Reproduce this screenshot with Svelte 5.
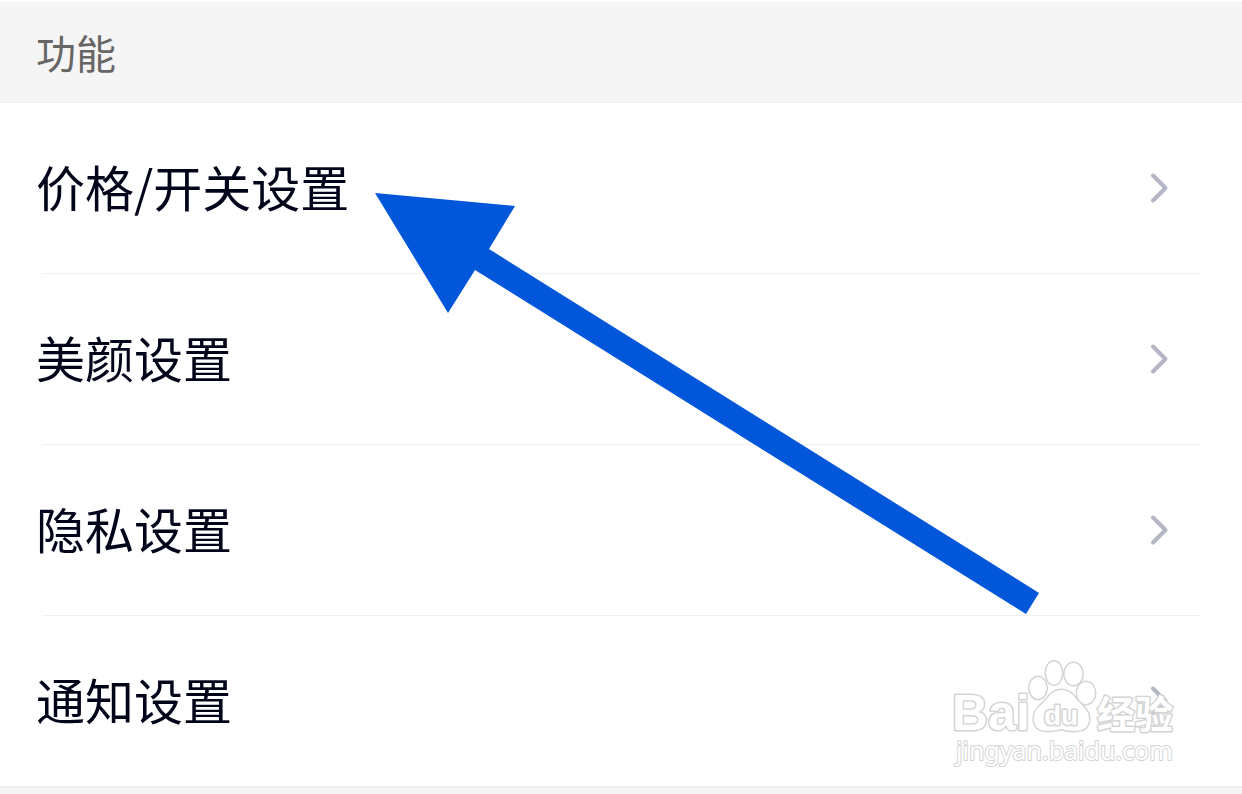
<script lang="ts">
  const title = '功能';
  const items = ['价格/开关设置', '美颜设置', '隐私设置', '通知设置'];
</script>

<main class="settings">
  <h2 class="section-title">{title}</h2>

  <ul class="list">
    {#each items as item (item)}
      <li>
        <button class="row" type="button">
          <span class="label">{item}</span>
          <svg class="chevron" viewBox="0 0 20 32" aria-hidden="true">
            <path d="M3 3.5 L15.5 16 L3 28.5" />
          </svg>
        </button>
      </li>
    {/each}
  </ul>

  <svg class="arrow" viewBox="0 0 666 422" aria-hidden="true">
    <path d="M0 1 L140 14 L114 57 L664 401 L651 422 L100 78 L73 121 Z" />
  </svg>

  <svg class="watermark" viewBox="0 0 230 120" aria-label="Baidu 经验">
    <text class="brand" x="0" y="80">Bai</text>
    <ellipse cx="86" cy="38" rx="8.5" ry="11" />
    <ellipse cx="102" cy="23" rx="8" ry="11.5" />
    <ellipse cx="121.5" cy="24" rx="9" ry="11" />
    <ellipse cx="134" cy="43" rx="9" ry="11" />
    <path d="M109 40 C99 40 96 49 91 53 C85 58 81 63 82 71 C84 83 97 82 109 79 C121 82 135 83 137 71 C138 63 133 58 127 52 C121 46 119 40 109 40 Z" />
    <text class="du" x="92" y="75">du</text>
    <text class="cjk" x="145" y="78">经验</text>
    <text class="site" x="4" y="110">jingyan.baidu.com</text>
  </svg>
</main>

<style>
  :global(body) {
    margin: 0;
    background: #fff;
  }

  .settings {
    position: relative;
    overflow: hidden;
    border-top: 2px solid #fff;
    border-bottom: 8px solid #f5f5f5;
    font-family: 'Noto Sans CJK SC', sans-serif;
  }

  .section-title {
    margin: 0;
    padding: 20px 36px;
    border-bottom: 1px solid #f0f0f0;
    background: #f5f5f5;
    color: #666;
    font-size: 40px;
    font-weight: 400;
    line-height: 60px;
  }

  .list {
    margin: 0;
    padding: 0;
    list-style: none;
  }

  .row {
    display: flex;
    align-items: center;
    justify-content: space-between;
    width: 100%;
    padding: 50px 72px 50px 36px;
    border: 0;
    background: none;
    color: #020419;
    font: inherit;
    font-size: 49px;
    line-height: 66px;
    text-align: left;
    cursor: pointer;
  }

  .label {
    padding-bottom: 4px;
  }

  li::after {
    content: '';
    display: block;
    height: 1px;
    margin: 0 42px;
    background: #f0f0f0;
  }

  li:last-child::after {
    height: 2px;
    margin: 0;
  }

  .chevron {
    width: 20px;
    height: 32px;
    fill: none;
    stroke: #b5b6c5;
    stroke-width: 4;
    stroke-linecap: round;
    stroke-linejoin: round;
  }

  /* pointer drawn over the rows, tip beside the first label */
  .arrow {
    position: absolute;
    top: 190px;
    left: 375px;
    width: 666px;
    height: 422px;
    fill: #0156d9;
    pointer-events: none;
  }

  .watermark {
    position: absolute;
    right: 60px;
    bottom: 18px;
    width: 230px;
    height: 120px;
    fill: #fff;
    stroke: #d4d4d4;
    stroke-width: 3;
    stroke-linejoin: round;
    paint-order: stroke;
    pointer-events: none;
  }

  .brand {
    font: bold 50px 'Liberation Sans', sans-serif;
  }

  .du {
    font: bold 28px 'Liberation Sans', sans-serif;
  }

  .cjk {
    font: bold 38px 'Noto Sans CJK SC', sans-serif;
  }

  .site {
    font: 25px 'Noto Sans', sans-serif;
    stroke-width: 2;
  }
</style>
